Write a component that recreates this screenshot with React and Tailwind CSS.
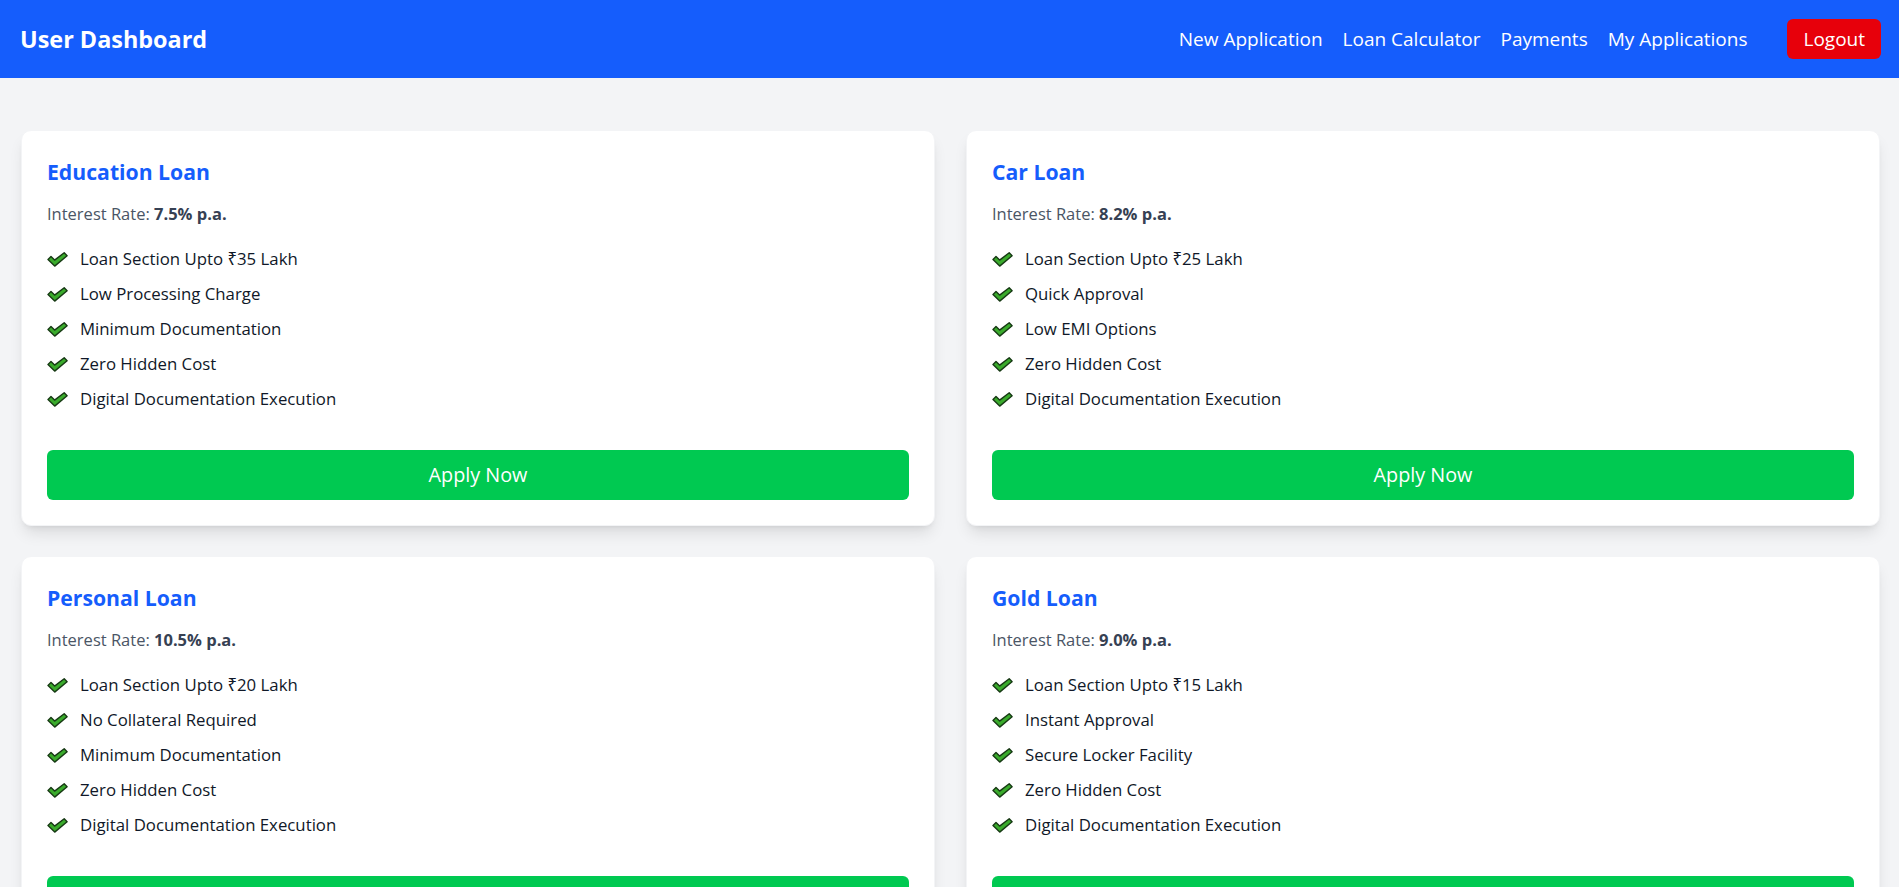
import React from "react";

const loans = [
  {
    title: "Education Loan",
    rate: "7.5% p.a.",
    features: [
      "Loan Section Upto ₹35 Lakh",
      "Low Processing Charge",
      "Minimum Documentation",
      "Zero Hidden Cost",
      "Digital Documentation Execution",
    ],
  },
  {
    title: "Car Loan",
    rate: "8.2% p.a.",
    features: [
      "Loan Section Upto ₹25 Lakh",
      "Quick Approval",
      "Low EMI Options",
      "Zero Hidden Cost",
      "Digital Documentation Execution",
    ],
  },
  {
    title: "Personal Loan",
    rate: "10.5% p.a.",
    features: [
      "Loan Section Upto ₹20 Lakh",
      "No Collateral Required",
      "Minimum Documentation",
      "Zero Hidden Cost",
      "Digital Documentation Execution",
    ],
  },
  {
    title: "Gold Loan",
    rate: "9.0% p.a.",
    features: [
      "Loan Section Upto ₹15 Lakh",
      "Instant Approval",
      "Secure Locker Facility",
      "Zero Hidden Cost",
      "Digital Documentation Execution",
    ],
  },
];

function Check() {
  return (
    <svg
      width="21"
      height="15"
      viewBox="0 0 21 15"
      className="shrink-0 mt-[1px]"
    >
      <path
        d="M1 7.6 L4 4.6 L7.6 8.1 L17.2 0.8 L20.1 3.7 L7.7 14.1 Z"
        fill="#3aab2c"
        stroke="#173a14"
        strokeWidth="1.4"
        strokeLinejoin="round"
      />
    </svg>
  );
}

function LoanCard({ loan }) {
  return (
    <div className="bg-white rounded-[10px] shadow-lg border border-gray-100 px-[25px] pt-[25px] pb-[25px] flex flex-col">
      <h2 className="text-[21.2px] leading-[31px] font-bold text-blue-600">
        {loan.title}
      </h2>
      <p className="mt-[14px] text-[16.5px] leading-[26px] text-gray-600">
        Interest Rate: <span className="font-bold text-gray-700">{loan.rate}</span>
      </p>
      <ul className="mt-[19px] flex flex-col gap-[9px]">
        {loan.features.map((f) => (
          <li
            key={f}
            className="flex items-center gap-[12px] text-[16.8px] leading-[26px] text-gray-900"
          >
            <Check />
            <span>{f}</span>
          </li>
        ))}
      </ul>
      <button className="mt-[38px] h-[50px] w-full rounded-[6px] bg-green-500 text-white text-[19.8px]">
        Apply Now
      </button>
    </div>
  );
}

export default function App() {
  return (
    <div
      className="min-h-screen bg-gray-100"
      style={{ fontFamily: '"Open Sans", "Noto Sans", sans-serif' }}
    >
      <header className="h-[78px] bg-blue-600 flex items-center justify-between pl-[20px] pr-[18px]">
        <h1 className="text-white font-bold text-[23.4px] leading-[32px]">
          User Dashboard
        </h1>
        <nav className="flex items-center">
          <div className="flex items-center gap-[20px] text-white text-[19px]">
            <a>New Application</a>
            <a>Loan Calculator</a>
            <a>Payments</a>
            <a>My Applications</a>
          </div>
          <button className="ml-[40px] h-[40px] px-[16px] rounded-[6px] bg-red-600 text-white text-[19px]">
            Logout
          </button>
        </nav>
      </header>
      <main className="pt-[52px] pl-[21px] pr-[19px] pb-[32px] grid grid-cols-2 gap-x-[31px] gap-y-[30px]">
        {loans.map((l) => (
          <LoanCard key={l.title} loan={l} />
        ))}
      </main>
    </div>
  );
}
